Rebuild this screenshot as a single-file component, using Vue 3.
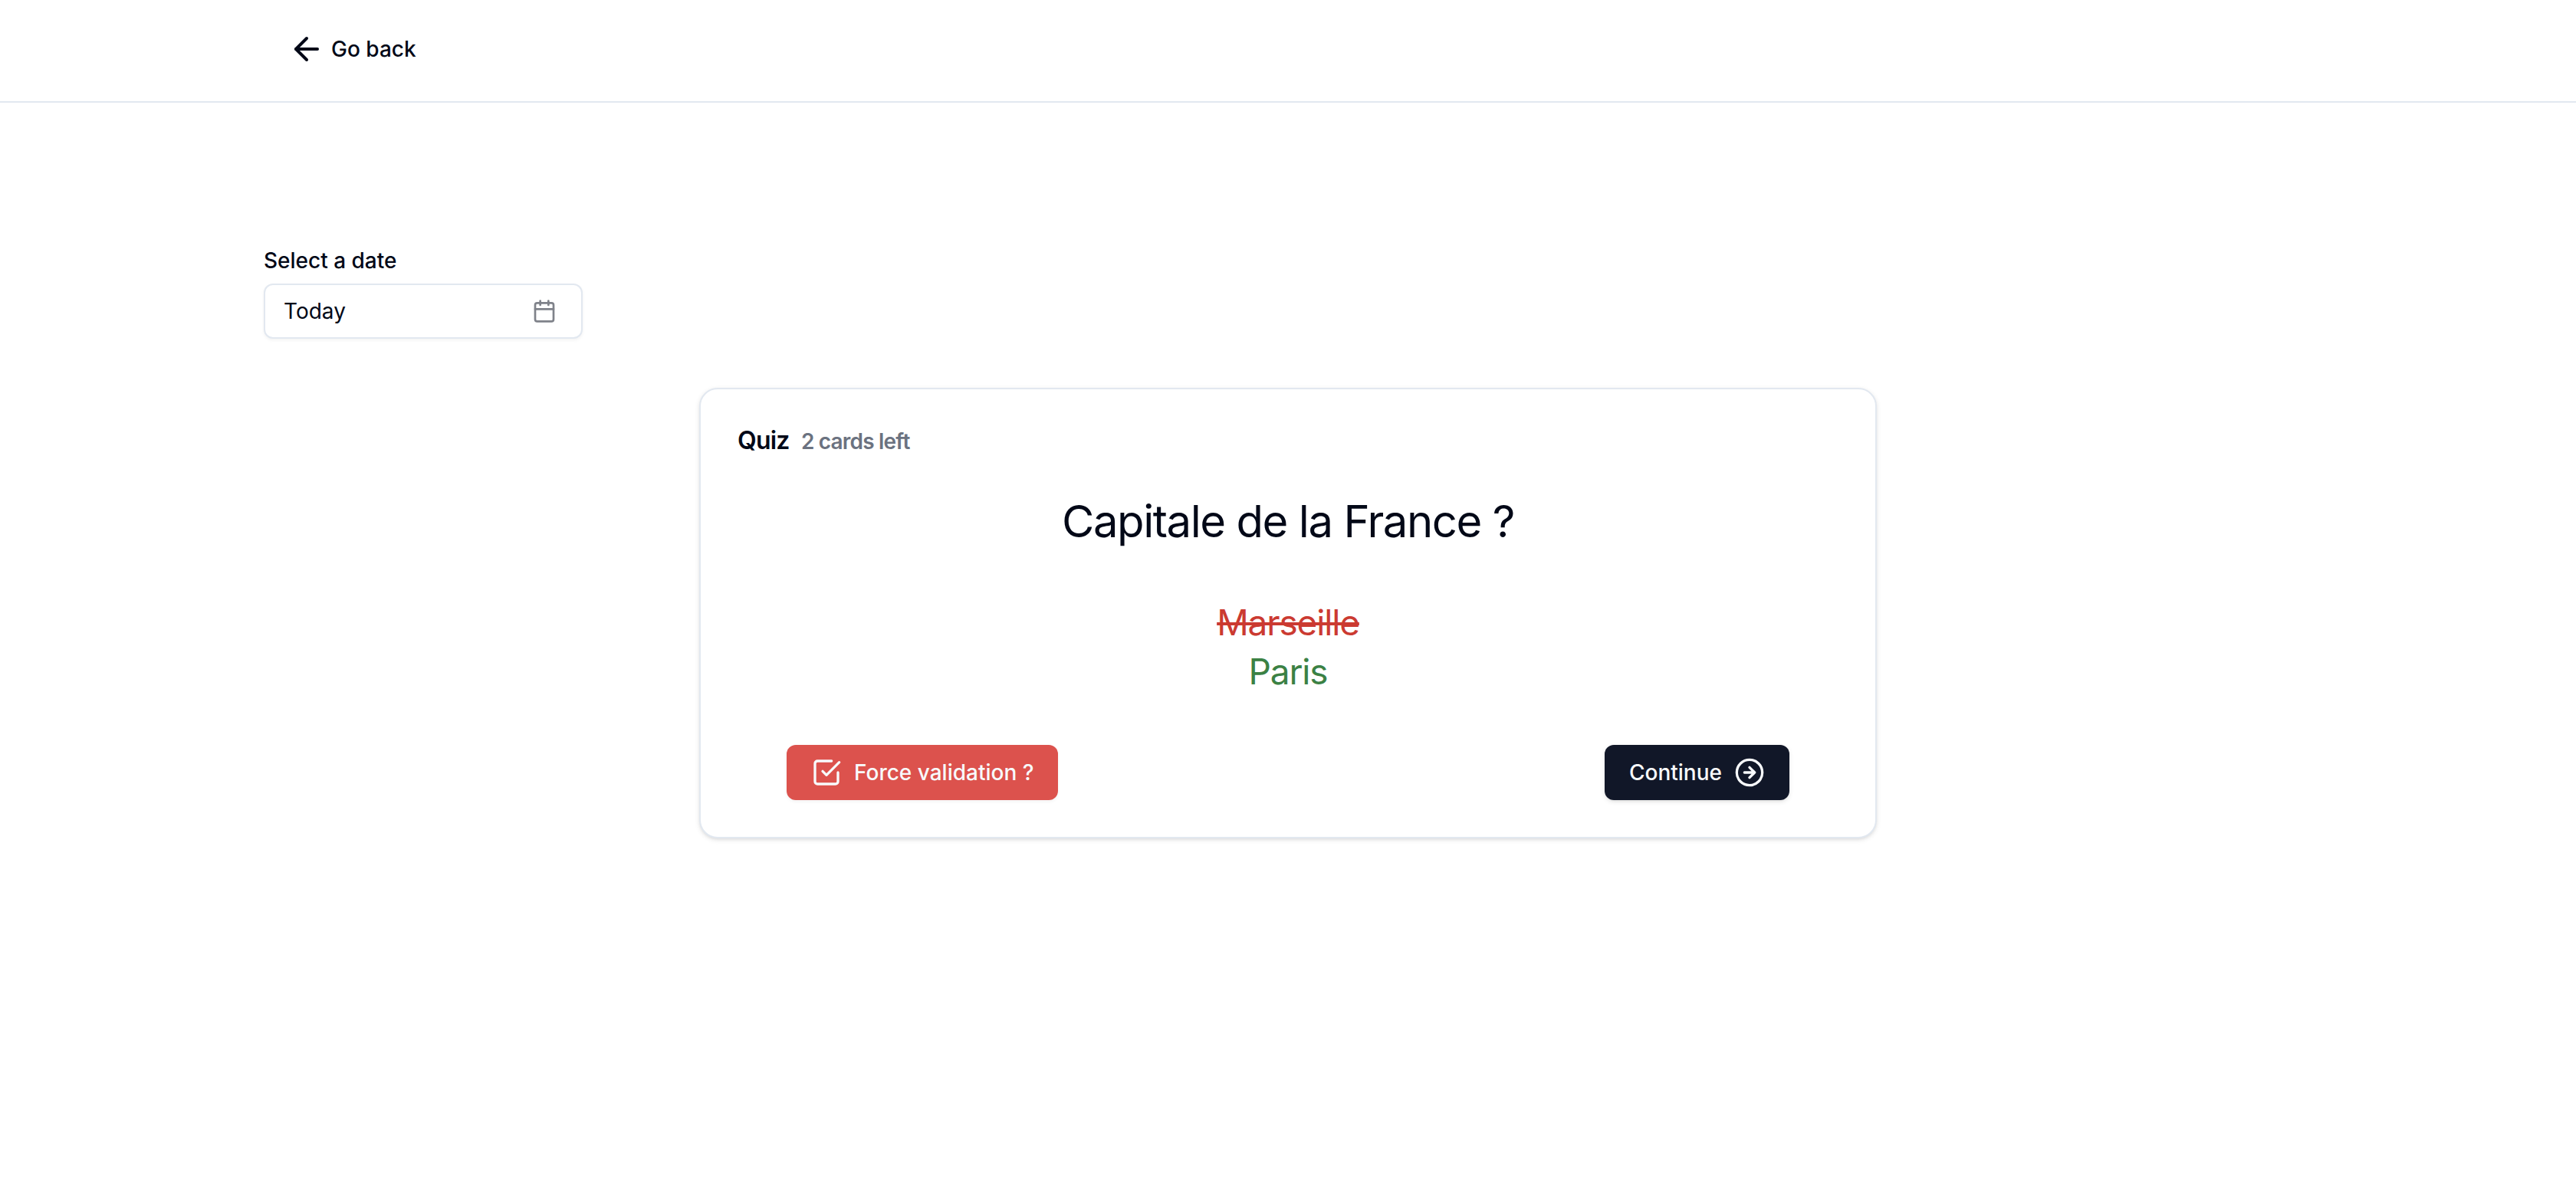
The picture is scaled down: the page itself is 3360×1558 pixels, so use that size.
<script setup>
import { ref } from 'vue'

const selectedDate = ref('Today')
const cardsLeft = ref(2)
const card = ref({ question: 'Capitale de la France ?', given: 'Marseille', expected: 'Paris' })
</script>

<template>
  <div class="page">
    <header class="topbar">
      <div class="container">
        <button type="button" class="btn btn-ghost">
          <svg class="icon-lg" viewBox="0 0 24 24" aria-hidden="true">
            <path d="m12 19-7-7 7-7" />
            <path d="M19 12H5" />
          </svg>
          Go back
        </button>
      </div>
    </header>

    <main class="container content">
      <div class="field">
        <label for="quiz-date">Select a date</label>
        <button id="quiz-date" type="button" class="date-picker">
          <span>{{ selectedDate }}</span>
          <svg class="icon-sm" viewBox="0 0 24 24" aria-hidden="true">
            <rect x="3" y="4" width="18" height="18" rx="2" />
            <path d="M16 2v4M8 2v4M3 10h18" />
          </svg>
        </button>
      </div>

      <section class="card">
        <h1 class="card-title">
          Quiz <span class="count">{{ cardsLeft }} cards left</span>
        </h1>
        <p class="question">{{ card.question }}</p>
        <div class="answers">
          <del class="wrong">{{ card.given }}</del>
          <span class="right">{{ card.expected }}</span>
        </div>
        <div class="actions">
          <button type="button" class="btn btn-danger">
            <svg class="icon-md" viewBox="0 0 24 24" aria-hidden="true">
              <path d="m9 11 3 3L22 4" />
              <path d="M21 12v7a2 2 0 0 1-2 2H5a2 2 0 0 1-2-2V5a2 2 0 0 1 2-2h11" />
            </svg>
            Force validation ?
          </button>
          <button type="button" class="btn btn-primary">
            Continue
            <svg class="icon-md" viewBox="0 0 24 24" aria-hidden="true">
              <circle cx="12" cy="12" r="10" />
              <path d="M8 12h8M12 16l4-4-4-4" />
            </svg>
          </button>
        </div>
      </section>
    </main>
  </div>
</template>

<style>
body {
  margin: 0;
  background: #fff;
}
</style>

<style scoped>
.page {
  min-height: 100vh;
  font-family: Inter, 'Liberation Sans', sans-serif;
  font-size: 28px;
  line-height: 40px;
  color: #020817;
}

.page * {
  box-sizing: border-box;
}

.container {
  max-width: 2800px;
  margin: 0 auto;
  padding: 0 64px;
}

.topbar {
  padding: 28px 0 32px;
  border-bottom: 2px solid #e2e8f0;
}

.content {
  display: flex;
  flex-direction: column;
  gap: 64px;
  padding-top: 186px;
  padding-bottom: 64px;
}

button {
  font: inherit;
  color: inherit;
  cursor: pointer;
}

svg {
  flex: none;
  fill: none;
  stroke: currentColor;
  stroke-width: 2;
  stroke-linecap: round;
  stroke-linejoin: round;
}

.icon-sm {
  width: 32px;
  height: 32px;
  opacity: 0.5;
}

.icon-md {
  width: 40px;
  height: 40px;
}

.icon-lg {
  width: 48px;
  height: 48px;
}

.btn {
  display: inline-flex;
  align-items: center;
  gap: 16px;
  height: 72px;
  padding: 0 32px;
  border: 0;
  border-radius: 12px;
  font-weight: 500;
  white-space: nowrap;
}

.btn-ghost {
  gap: 8px;
  background: transparent;
}

.btn-danger {
  background: #dc524d;
  color: #f8fafc;
  box-shadow: 0 2px 4px rgb(0 0 0 / 5%);
}

.btn-primary {
  background: #111728;
  color: #f8fafc;
  box-shadow: 0 2px 6px rgb(0 0 0 / 10%), 0 2px 4px -2px rgb(0 0 0 / 10%);
}

.field {
  display: flex;
  flex-direction: column;
  align-items: flex-start;
  gap: 10px;
}

.field label {
  font-weight: 500;
}

.date-picker {
  display: flex;
  align-items: center;
  justify-content: space-between;
  width: 416px;
  height: 72px;
  padding: 0 32px 0 24px;
  border: 2px solid #e2e8f0;
  border-radius: 12px;
  background: #fff;
  box-shadow: 0 2px 4px rgb(0 0 0 / 5%);
}

.card {
  width: 100%;
  max-width: 1536px;
  margin: 0 auto;
  padding: 48px;
  border: 2px solid #e2e8f0;
  border-radius: 24px;
  background: #fff;
  box-shadow: 0 2px 6px rgb(0 0 0 / 10%), 0 2px 4px -2px rgb(0 0 0 / 10%);
}

.card-title {
  margin: 0;
  font-size: 32px;
  line-height: 38px;
  font-weight: 600;
  letter-spacing: -0.025em;
}

.count {
  margin-left: 8px;
  font-size: 28px;
  line-height: 28px;
  color: #6b7280;
}

.question {
  margin: 50px 0 0;
  font-size: 58px;
  line-height: 72px;
  text-align: center;
  letter-spacing: -0.025em;
}

.answers {
  display: flex;
  flex-direction: column;
  align-items: center;
  margin-top: 64px;
  font-size: 46px;
  line-height: 64px;
  letter-spacing: -0.025em;
}

.wrong {
  color: #cb3a31;
}

.right {
  color: #3b8144;
}

.actions {
  display: flex;
  justify-content: space-between;
  margin-top: 64px;
  padding: 0 64px;
}
</style>
